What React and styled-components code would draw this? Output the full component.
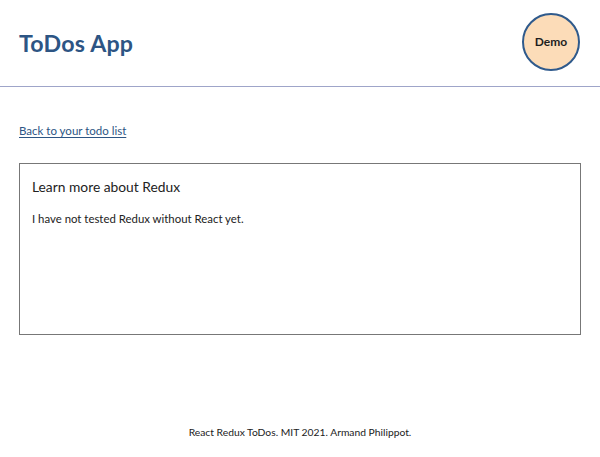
import React from "react";
import styled, { createGlobalStyle } from "styled-components";

const GlobalStyle = createGlobalStyle`
  html, body {
    margin: 0;
    padding: 0;
    background: #fff;
    font-family: "Lato", "Open Sans", sans-serif;
    color: #222;
  }
`;

const App = () => {
  return (
    <>
      <GlobalStyle />
      <Page>
        <Header>
          <Title>ToDos App</Title>
          <Avatar>Demo</Avatar>
        </Header>
        <Main>
          <BackLink href="#">Back to your todo list</BackLink>
          <Card>
            <CardTitle>Learn more about Redux</CardTitle>
            <CardText>I have not tested Redux without React yet.</CardText>
          </Card>
        </Main>
        <Footer>React Redux ToDos. MIT 2021. Armand Philippot.</Footer>
      </Page>
    </>
  );
};

export default App;

/* Styled Components */
const Page = styled.div`
  display: flex;
  flex-direction: column;
  min-height: 457px;
`;

const Header = styled.header`
  display: flex;
  align-items: center;
  justify-content: space-between;
  height: 86px;
  padding: 0 20px 0 19px;
  border-bottom: 1px solid #9fa5c9;
`;

const Title = styled.h1`
  margin: 0 0 1px;
  font-size: 23.2px;
  font-weight: 700;
  color: #2d5584;
  letter-spacing: 0.2px;
`;

const Avatar = styled.div`
  width: 54px;
  height: 54px;
  border-radius: 50%;
  background: #fcdcb8;
  border: 2px solid #2f5a8c;
  display: flex;
  align-items: center;
  justify-content: center;
  font-size: 12px;
  font-weight: 700;
  color: #1e1e1e;
  margin-bottom: 3px;
`;

const Main = styled.main`
  display: flex;
  flex-direction: column;
  align-items: flex-start;
  padding: 37px 19px 0;
  flex: 1;
`;

const BackLink = styled.a`
  font-size: 11.5px;
  color: #2d5584;
  text-decoration: underline;
  text-underline-offset: 2px;
  margin-bottom: 26px;
`;

const Card = styled.section`
  box-sizing: border-box;
  width: 100%;
  height: 172px;
  border: 1px solid #777;
  padding: 14px 12px;
`;

const CardTitle = styled.h2`
  margin: 0 0 17px;
  font-size: 13.8px;
  font-weight: 400;
  color: #222;
`;

const CardText = styled.p`
  margin: 0;
  font-size: 11.4px;
  color: #222;
`;

const Footer = styled.footer`
  text-align: center;
  font-size: 10.3px;
  color: #222;
  padding-bottom: 19px;
`;
